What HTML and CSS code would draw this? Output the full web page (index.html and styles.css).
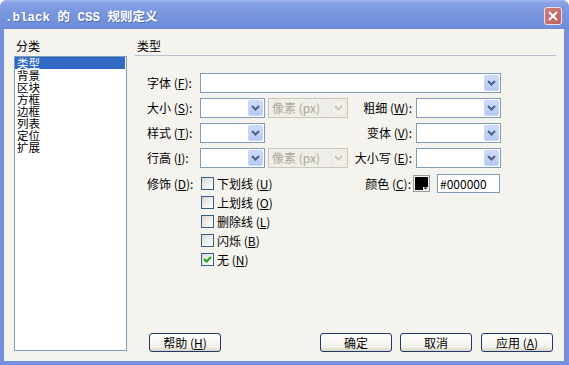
FILE: index.html
```html
<!DOCTYPE html>
<html lang="zh-CN">
<head>
<meta charset="utf-8">
<title>.black 的 CSS 规则定义</title>
<link rel="stylesheet" href="styles.css">
</head>
<body>
<div class="window">
  <div class="titlebar">
    <span class="title">.black 的 CSS 规则定义</span>
    <span class="close"><svg width="16" height="16" viewBox="0 0 16 16"><path d="M4 4 L12 12 M12 4 L4 12"/></svg></span>
  </div>
  <div class="client">
    <div class="cat">
      <div class="cat-label">分类</div>
      <ul class="listbox">
        <li class="sel">类型</li>
        <li>背景</li>
        <li>区块</li>
        <li>方框</li>
        <li>边框</li>
        <li>列表</li>
        <li>定位</li>
        <li>扩展</li>
      </ul>
    </div>
    <div class="panel">
      <div class="heading">类型</div>
      <div class="form">
        <div class="lbl">字体 (<u>F</u>):</div>
        <div class="select span-all"><span class="value"></span><span class="arrow"><svg width="9" height="6" viewBox="0 0 9 6"><polyline points="1,1 4.5,4.5 8,1"/></svg></span></div>

        <div class="lbl">大小 (<u>S</u>):</div>
        <div class="select"><span class="value"></span><span class="arrow"><svg width="9" height="6" viewBox="0 0 9 6"><polyline points="1,1 4.5,4.5 8,1"/></svg></span></div>
        <div class="select disabled"><span class="value">像素 (px)</span><span class="arrow"><svg width="9" height="6" viewBox="0 0 9 6"><polyline points="1,1 4.5,4.5 8,1"/></svg></span></div>
        <div class="lbl right">粗细 (<u>W</u>):</div>
        <div class="select"><span class="value"></span><span class="arrow"><svg width="9" height="6" viewBox="0 0 9 6"><polyline points="1,1 4.5,4.5 8,1"/></svg></span></div>

        <div class="lbl">样式 (<u>T</u>):</div>
        <div class="select"><span class="value"></span><span class="arrow"><svg width="9" height="6" viewBox="0 0 9 6"><polyline points="1,1 4.5,4.5 8,1"/></svg></span></div>
        <div class="blank"></div>
        <div class="lbl right">变体 (<u>V</u>):</div>
        <div class="select"><span class="value"></span><span class="arrow"><svg width="9" height="6" viewBox="0 0 9 6"><polyline points="1,1 4.5,4.5 8,1"/></svg></span></div>

        <div class="lbl">行高 (<u>I</u>):</div>
        <div class="select"><span class="value"></span><span class="arrow"><svg width="9" height="6" viewBox="0 0 9 6"><polyline points="1,1 4.5,4.5 8,1"/></svg></span></div>
        <div class="select disabled"><span class="value">像素 (px)</span><span class="arrow"><svg width="9" height="6" viewBox="0 0 9 6"><polyline points="1,1 4.5,4.5 8,1"/></svg></span></div>
        <div class="lbl right">大小写 (<u>E</u>):</div>
        <div class="select"><span class="value"></span><span class="arrow"><svg width="9" height="6" viewBox="0 0 9 6"><polyline points="1,1 4.5,4.5 8,1"/></svg></span></div>

        <div class="lbl deco-lbl">修饰 (<u>D</u>):</div>
        <div class="checks">
          <div class="check"><span class="cb"></span><span>下划线 (<u>U</u>)</span></div>
          <div class="check"><span class="cb"></span><span>上划线 (<u>O</u>)</span></div>
          <div class="check"><span class="cb"></span><span>删除线 (<u>L</u>)</span></div>
          <div class="check"><span class="cb"></span><span>闪烁 (<u>B</u>)</span></div>
          <div class="check"><span class="cb on"><svg width="11" height="11" viewBox="0 0 11 11"><polyline points="2,5 4.5,7.5 9,3"/></svg></span><span>无 (<u>N</u>)</span></div>
        </div>
        <div class="color">
          <span class="color-lbl">颜色 (<u>C</u>):</span>
          <span class="swatch"><svg width="17" height="17" viewBox="0 0 17 17"><rect x="0.5" y="0.5" width="16" height="16" fill="#f4f3ee" stroke="#9a9a9a"/><rect x="2" y="2" width="13" height="13" fill="#000"/><rect x="10" y="12" width="5" height="3" fill="#fff"/><polygon points="10.5,12.5 14.5,12.5 12.5,14.5" fill="#000"/></svg></span>
          <span class="field">#000000</span>
        </div>
      </div>
      <div class="spacer"></div>
      <div class="buttons">
        <span class="btn">帮助 (<u>H</u>)</span>
        <span class="btn ok">确定</span>
        <span class="btn">取消</span>
        <span class="btn">应用 (<u>A</u>)</span>
      </div>
    </div>
  </div>
</div>
</body>
</html>
```

FILE: styles.css
```css
html, body {
  margin: 0;
  padding: 0;
  background: #ffffff;
}

body {
  font-family: "Noto Sans CJK SC", "Noto Sans", sans-serif;
  font-size: 12px;
  color: #000;
}

u {
  text-decoration: underline;
  text-underline-offset: 1px;
}

.window {
  width: 569px;
  height: 365px;
  box-sizing: border-box;
  background: #7590dc;
  border-radius: 7px 7px 0 0;
  display: flex;
  flex-direction: column;
  overflow: hidden;
}

.titlebar {
  height: 29px;
  box-sizing: border-box;
  padding: 2px 7px 0 5px;
  display: flex;
  align-items: center;
  background: linear-gradient(#a3b8ee 0px, #86a1e4 3px, #7996de 12px, #7290da 26px, #6b88d4 29px);
}

.title {
  flex: 1;
  color: #ffffff;
  font-family: "Liberation Mono", "Noto Sans CJK SC", monospace;
  font-size: 12.5px;
  font-weight: bold;
  text-shadow: 1px 1px 0 rgba(40, 60, 130, 0.45);
  white-space: pre;
}

.close {
  width: 18px;
  height: 18px;
  box-sizing: border-box;
  border: 1px solid #f2dfe3;
  border-radius: 3px;
  background: linear-gradient(135deg, #d07c7e, #c0605f);
  display: flex;
  align-items: center;
  justify-content: center;
}

.close svg path {
  stroke: #ffffff;
  stroke-width: 2;
  fill: none;
}

.client {
  flex: 1;
  margin: 0 5px 4px 4px;
  background: #f4f3ee;
  display: flex;
  padding: 11px 8px 9px 10px;
  gap: 8px;
}

.cat {
  width: 113px;
  display: flex;
  flex-direction: column;
}

.cat-label {
  line-height: 12px;
  height: 12px;
  padding-left: 2px;
}

.listbox {
  list-style: none;
  margin: 4px 0 0 0;
  padding: 0;
  width: 113px;
  height: 295px;
  box-sizing: border-box;
  border: 1px solid #7f9db9;
  background: #ffffff;
}

.listbox li {
  height: 12px;
  line-height: 12px;
  font-size: 11.5px;
  padding-left: 2px;
  margin-right: 1px;
}

.listbox li.sel {
  background: #316ac5;
  color: #ffffff;
}

.panel {
  flex: 1;
  display: flex;
  flex-direction: column;
}

.heading {
  line-height: 12px;
  height: 12px;
  padding-left: 2px;
  padding-bottom: 3px;
  border-bottom: 1px solid #b9bfcc;
}

.form {
  margin-top: 17px;
  padding-left: 12px;
  display: grid;
  grid-template-columns: 53px 65px 83px 68px 85px;
  grid-template-rows: 20px 20px 20px 20px auto;
  row-gap: 5px;
  align-items: center;
}

.lbl {
  white-space: nowrap;
  line-height: 20px;
}

.lbl.right {
  text-align: right;
  padding-right: 4px;
}

.select {
  display: flex;
  height: 20px;
  box-sizing: border-box;
  border: 1px solid #7f9db9;
  background: #ffffff;
  padding: 1px;
}

.select.span-all {
  grid-column: 2 / 6;
}

.select.disabled {
  margin-left: 3px;
  border-color: #c9c7ba;
  background: #efeee8;
  color: #aca899;
}

.select .value {
  flex: 1;
  padding-left: 2px;
  line-height: 16px;
  white-space: nowrap;
  overflow: hidden;
}

.arrow {
  width: 15px;
  height: 16px;
  box-sizing: border-box;
  border: 1px solid #c6d5f8;
  border-radius: 2px;
  background: linear-gradient(#cfdcfb, #b6c9f4);
  display: flex;
  align-items: center;
  justify-content: center;
}

.arrow svg polyline {
  fill: none;
  stroke: #4d6185;
  stroke-width: 2;
}

.select.disabled .arrow {
  border-color: #e8e6de;
  background: #f1f0ea;
}

.select.disabled .arrow svg polyline {
  stroke: #c9c7ba;
}

.deco-lbl {
  align-self: start;
  margin-top: 1px;
  line-height: 19px;
}

.checks {
  grid-column: 2 / 4;
  align-self: start;
  margin-top: 1px;
  display: flex;
  flex-direction: column;
}

.check {
  height: 19px;
  display: flex;
  align-items: center;
  gap: 3px;
  white-space: nowrap;
}

.cb {
  margin-left: 1px;
  width: 13px;
  height: 13px;
  box-sizing: border-box;
  border: 1px solid #35608a;
  background: linear-gradient(135deg, #d9d9d3, #f6f6f3 70%, #ffffff);
  display: flex;
  align-items: center;
  justify-content: center;
}

.cb svg polyline {
  fill: none;
  stroke: #21a121;
  stroke-width: 2;
}

.color {
  grid-column: 4 / 6;
  align-self: start;
  margin-top: 1px;
  height: 19px;
  display: flex;
  align-items: center;
}

.color-lbl {
  width: 65px;
  box-sizing: border-box;
  padding-right: 2px;
  text-align: right;
  white-space: nowrap;
}

.swatch {
  width: 17px;
  height: 17px;
  display: block;
  margin-right: 7px;
}

.swatch svg {
  display: block;
}

.field {
  width: 63px;
  height: 19px;
  box-sizing: border-box;
  border: 1px solid #7f9db9;
  background: #ffffff;
  padding-left: 2px;
  line-height: 17px;
  white-space: nowrap;
}

.spacer {
  flex: 1;
}

.buttons {
  display: flex;
  padding: 0 3px 0 14px;
  gap: 8px;
}

.btn {
  width: 72px;
  height: 19px;
  box-sizing: border-box;
  border: 1px solid #1f3a64;
  border-radius: 3px;
  background: linear-gradient(#ffffff, #f3f2ec 75%, #d9d4c8);
  display: flex;
  align-items: center;
  justify-content: center;
  white-space: nowrap;
}

.btn.ok {
  margin-left: auto;
}

.btn:last-child {
  margin-left: 1px;
}
```
